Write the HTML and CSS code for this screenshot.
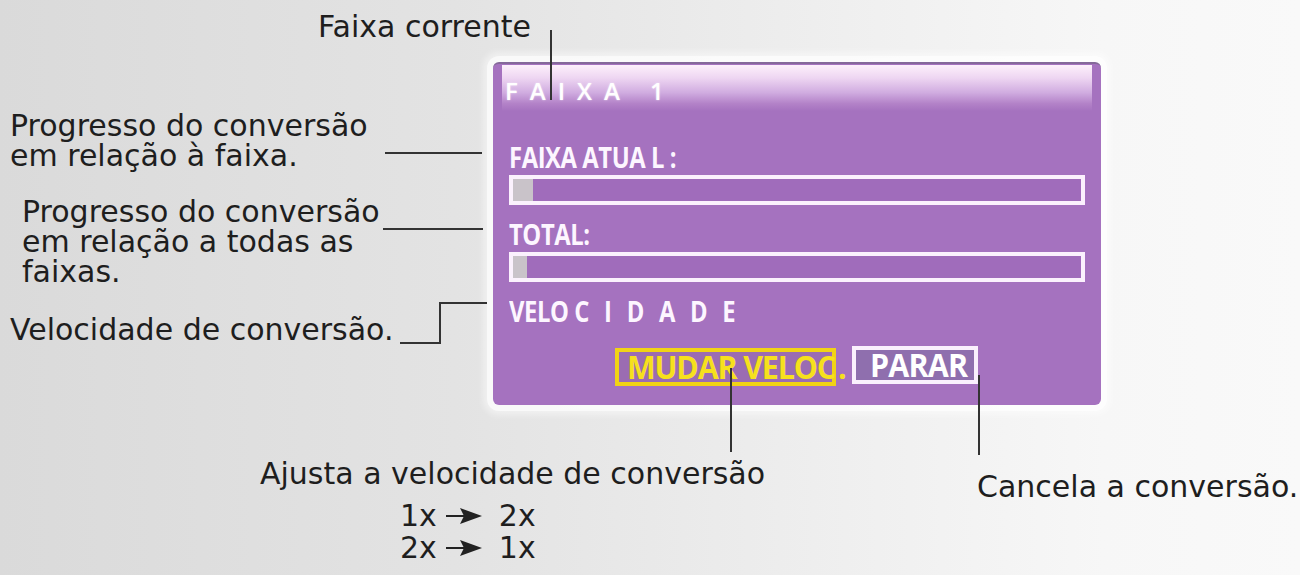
FILE: index.html
```html
<!DOCTYPE html>
<html lang="pt">
<head>
<meta charset="utf-8">
<title>Conversão</title>
<link rel="stylesheet" href="styles.css">
</head>
<body>
<div class="stage">
  <div class="panel">
    <div class="panel-head"><span class="head-text">FAIXA 1</span></div>
    <div class="panel-body">
      <div class="label"><span class="label-text">FAIXA ATUA L :</span></div>
      <div class="bar"><div class="fill" style="width:20px"></div></div>
      <div class="label"><span class="label-text">TOTAL:</span></div>
      <div class="bar"><div class="fill" style="width:14px"></div></div>
      <div class="label"><span class="label-text">VELO <span class="spaced">C I D A D E</span></span></div>
      <div class="buttons">
        <div class="btn btn-speed"><span class="btn-text">MUDAR VELOC<span class="dot">.</span></span></div>
        <div class="btn btn-stop"><span class="btn-text">PARAR</span></div>
      </div>
    </div>
  </div>

  <div class="note note-top">Faixa corrente</div>
  <div class="note note-1">Progresso do conversão<br>em relação à faixa.</div>
  <div class="note note-2">Progresso do conversão<br>em relação a todas as<br>faixas.</div>
  <div class="note note-3">Velocidade de conversão.</div>
  <div class="note note-adjust">Ajusta a velocidade de conversão</div>
  <div class="note note-speeds">
    <div class="speed-row"><span>1x</span><svg class="arrow" viewBox="0 0 38 18" width="38" height="18"><line x1="1" y1="9" x2="20" y2="9" stroke="#222" stroke-width="2"/><path d="M15 1 L37 9 L15 17 L19 9 Z" fill="#222"/></svg><span>2x</span></div>
    <div class="speed-row"><span>2x</span><svg class="arrow" viewBox="0 0 38 18" width="38" height="18"><line x1="1" y1="9" x2="20" y2="9" stroke="#222" stroke-width="2"/><path d="M15 1 L37 9 L15 17 L19 9 Z" fill="#222"/></svg><span>1x</span></div>
  </div>
  <div class="note note-cancel">Cancela a conversão.</div>

  <div class="lead lead-top"></div>
  <div class="lead lead-1"></div>
  <div class="lead lead-2"></div>
  <div class="lead lead-3a"></div>
  <div class="lead lead-3b"></div>
  <div class="lead lead-3c"></div>
  <div class="lead lead-speed"></div>
  <div class="lead lead-stop"></div>
</div>
</body>
</html>
```

FILE: styles.css
```css
html, body {
  margin: 0;
  padding: 0;
}
body {
  width: 1300px;
  height: 575px;
  overflow: hidden;
  background: linear-gradient(to right, #dadada 0%, #e3e3e3 35%, #efefef 65%, #f7f7f7 85%, #f9f9f9 100%);
  font-family: "DejaVu Sans", Verdana, sans-serif;
  color: #1e1e1e;
}
.stage {
  position: relative;
  width: 1300px;
  height: 575px;
  padding: 62px 0 0 493px;
  box-sizing: border-box;
}

/* ---------- panel ---------- */
.panel {
  width: 608px;
  height: 343px;
  box-sizing: border-box;
  background: #a572bf;
  border-radius: 6px;
  border-top: 2px solid #85699a;
  box-shadow: 0 0 0 6px rgba(255,255,255,0.6), 0 0 6px 10px rgba(255,255,255,0.45);
  display: flex;
  flex-direction: column;
}
.panel-head {
  margin: 1px 9px 0 9px;
  height: 46px;
  background: linear-gradient(to bottom, #fdf0fb 0%, #eed6f2 28%, #d0ace0 60%, #b382c8 84%, #a572bf 100%);
  display: flex;
  align-items: flex-end;
  padding: 0 0 8px 3px;
  box-sizing: border-box;
}
.head-text {
  font-family: "Open Sans", "DejaVu Sans", sans-serif;
  font-weight: 600;
  font-size: 24px;
  line-height: 24px;
  letter-spacing: 12px;
  color: #ffffff;
  text-shadow: 0 0 2px rgba(255,255,255,0.6);
}
.panel-body {
  padding: 32px 16px 0 16px;
  display: flex;
  flex-direction: column;
}
.label {
  height: 29px;
  line-height: 29px;
  white-space: nowrap;
}
.label-text {
  display: inline-block;
  font-family: "Open Sans", "DejaVu Sans", sans-serif;
  font-weight: 700;
  font-size: 28px;
  line-height: 29px;
  color: #fdf6ff;
  letter-spacing: -0.5px;
  transform: scaleX(0.85);
  transform-origin: left center;
}
.spaced {
  letter-spacing: 4px;
  word-spacing: 2px;
}
.bar {
  margin: 3px 0 15px 0;
  width: 576px;
  height: 30px;
  box-sizing: border-box;
  border: 4px solid #fbf1fd;
  background: #a06cbb;
}
.fill {
  height: 100%;
  background: #c9c3c9;
}
.buttons {
  display: flex;
  gap: 16px;
  margin: 22px 0 0 106px;
}
.btn {
  height: 38px;
  box-sizing: border-box;
  border: 4px solid;
  display: flex;
  align-items: center;
  white-space: nowrap;
}
.btn-text {
  display: inline-block;
  font-family: "Open Sans", "DejaVu Sans", sans-serif;
  font-weight: 700;
  font-size: 32px;
  letter-spacing: -0.8px;
  line-height: 30px;
  transform: scaleX(0.95);
  transform-origin: left center;
}
.btn-speed {
  width: 221px;
  border-color: #f1d315;
  background: #9b6cb2;
  padding-left: 8px;
  overflow: visible;
}
.btn-speed .btn-text {
  color: #f6e01d;
  letter-spacing: -1.2px;
}
.dot {
  margin-left: 3px;
}
.btn-stop {
  width: 126px;
  margin-top: -2px;
  border-color: #faf0fd;
  background: #8f6fae;
  padding-left: 14px;
}
.btn-stop .btn-text {
  color: #ffffff;
}

/* ---------- callouts ---------- */
.note {
  position: absolute;
  font-size: 30px;
  line-height: 30px;
  white-space: nowrap;
}
.note-top { left: 318px; top: 12px; }
.note-1 { left: 10px; top: 111px; }
.note-2 { left: 22px; top: 197px; }
.note-3 { left: 10px; top: 315px; }
.note-adjust { left: 260px; top: 459px; }
.note-speeds {
  left: 400px;
  top: 500px;
  display: flex;
  flex-direction: column;
  line-height: 32px;
}
.speed-row {
  display: flex;
  align-items: center;
  gap: 8px;
}
.speed-row span:last-child { margin-left: 8px; }
.arrow { display: block; }
.note-cancel { left: 977px; top: 472px; }

.lead {
  position: absolute;
  background: #333;
}
.lead-top { left: 550px; top: 30px; width: 2px; height: 70px; }
.lead-1 { left: 385px; top: 152px; width: 97px; height: 2px; }
.lead-2 { left: 383px; top: 228px; width: 100px; height: 2px; }
.lead-3a { left: 400px; top: 342px; width: 41px; height: 2px; }
.lead-3b { left: 439px; top: 302px; width: 2px; height: 42px; }
.lead-3c { left: 439px; top: 302px; width: 48px; height: 2px; }
.lead-speed { left: 730px; top: 368px; width: 2px; height: 84px; }
.lead-stop { left: 978px; top: 375px; width: 2px; height: 80px; }
```
